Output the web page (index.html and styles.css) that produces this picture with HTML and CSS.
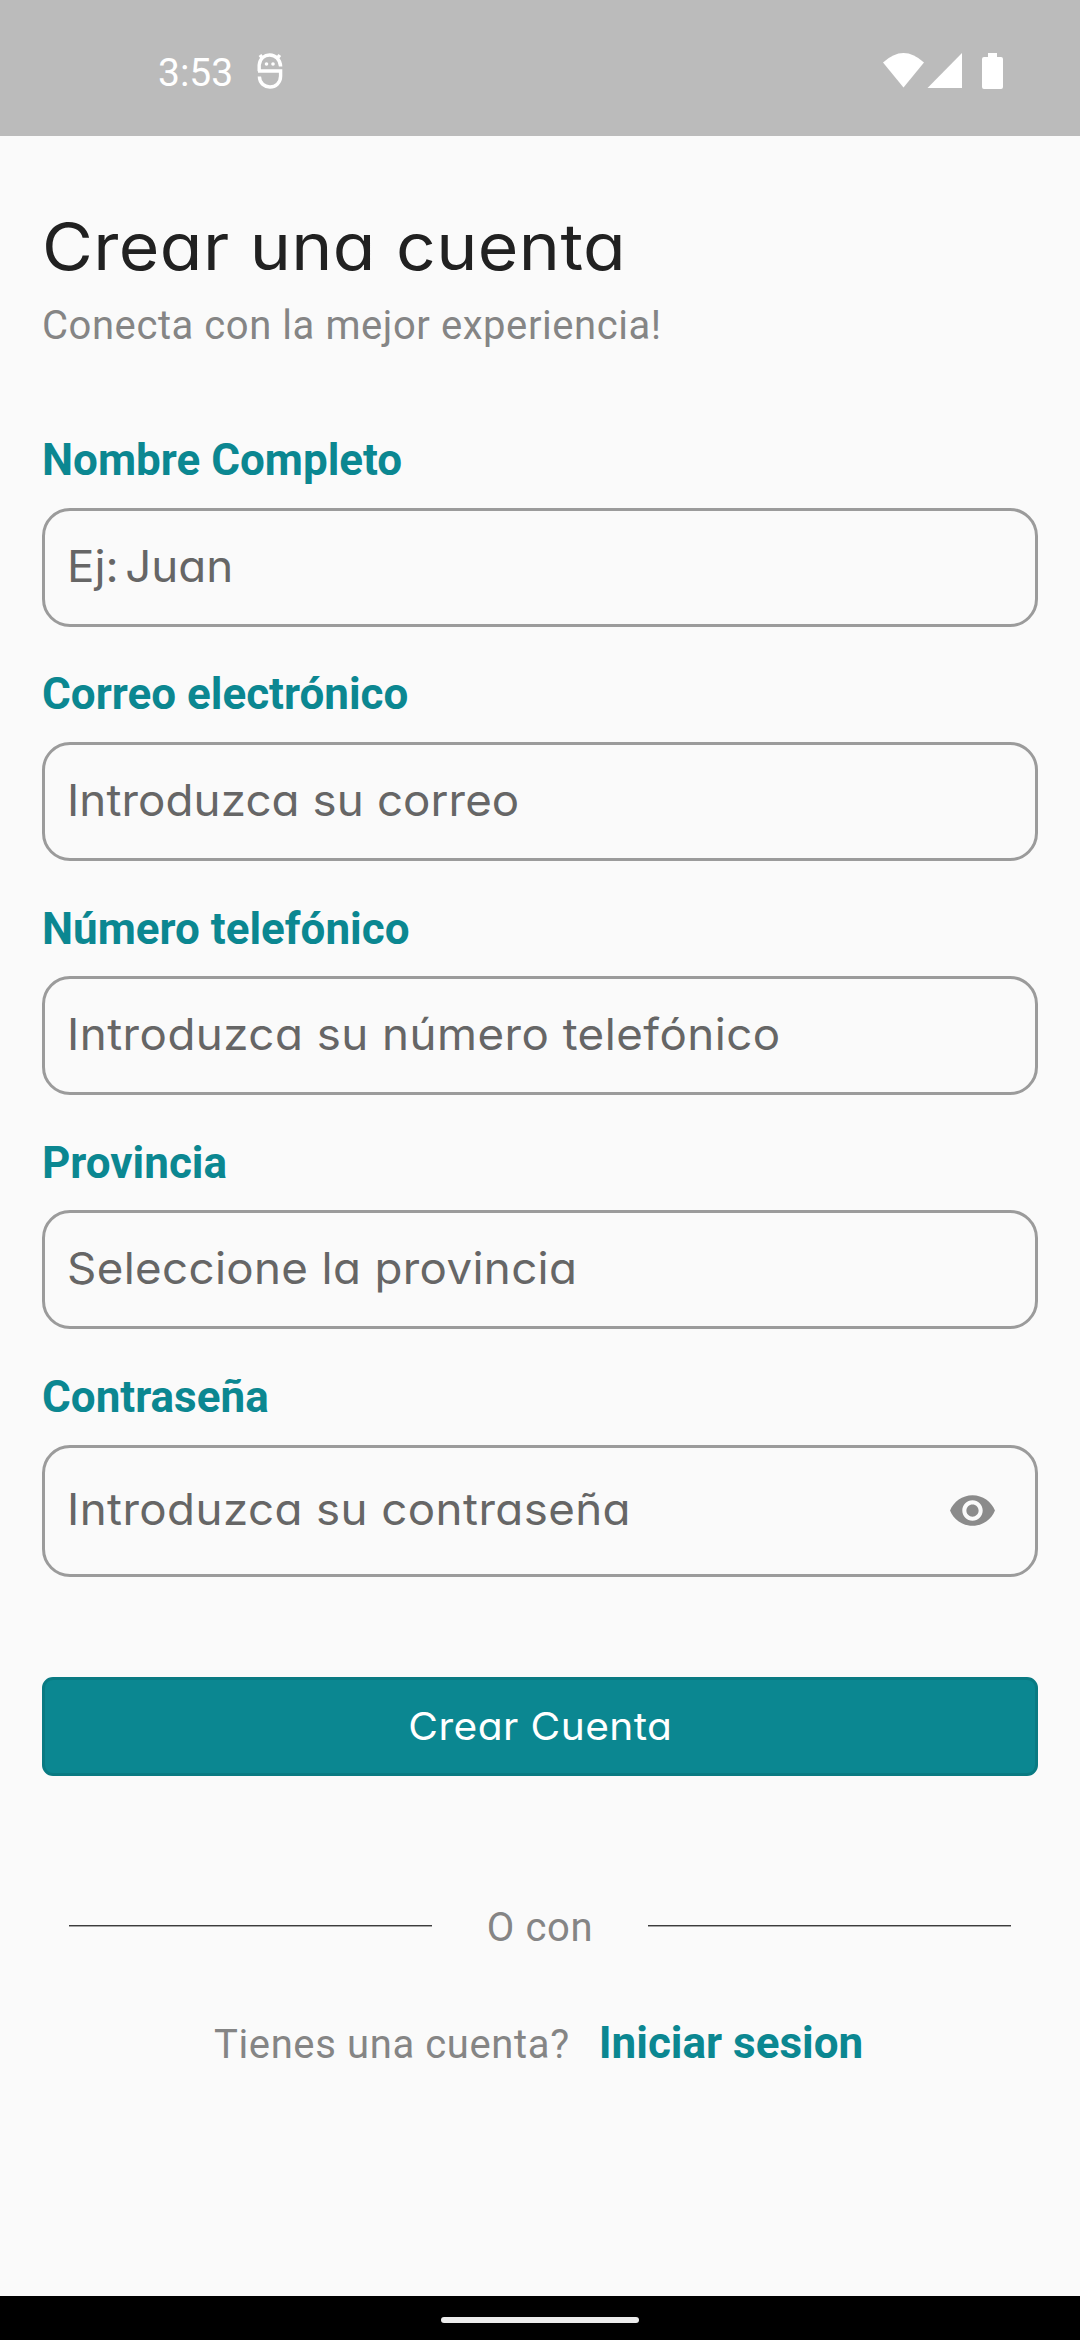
FILE: index.html
```html
<!DOCTYPE html>
<html lang="es">
<head>
<meta charset="utf-8">
<title>Crear una cuenta</title>
<link rel="stylesheet" href="styles.css">
</head>
<body>
<header class="status-bar">
  <div class="status-left">
    <span class="clock">3:53</span>
    <svg class="status-app" viewBox="0 0 26 36" fill="none" stroke="#fff" stroke-width="3.400">
      <path d="M2.200 18.200V12C3 -1.500 22.800 -1.500 23.600 13.500M1 18H23.600V23C23.600 37.500 2.600 37.500 2.400 23.500M3 2L6 6M22.800 2L19.800 6"/>
      <circle cx="9.500" cy="11" r="1.800" fill="#fff" stroke="none"/>
      <circle cx="16" cy="11" r="1.800" fill="#fff" stroke="none"/>
    </svg>
  </div>
  <svg class="status-icons" viewBox="0 0 120 36" fill="#fff">
    <path d="M0 9.500Q20.500 -9.500 41 9.500L20.500 34.500Z"/>
    <path d="M44.500 35L79 0V35Z"/>
    <path d="M105 0H114V4H118Q120 4 120 6V34Q120 36 118 36H101Q99 36 99 34V6Q99 4 101 4H105Z"/>
  </svg>
</header>
<main class="screen">
  <h1 class="title">Crear una cuenta</h1>
  <p class="subtitle">Conecta con la mejor experiencia!</p>
  <form class="form">
    <div class="group">
      <label class="label">Nombre Completo</label>
      <div class="field"><span class="hint hint-name">Ej: Juan</span></div>
    </div>
    <div class="group">
      <label class="label">Correo electrónico</label>
      <div class="field"><span class="hint hint-email">Introduzca su correo</span></div>
    </div>
    <div class="group">
      <label class="label">Número telefónico</label>
      <div class="field"><span class="hint hint-phone">Introduzca su número telefónico</span></div>
    </div>
    <div class="group">
      <label class="label">Provincia</label>
      <div class="field"><span class="hint hint-province">Seleccione la provincia</span></div>
    </div>
    <div class="group">
      <label class="label">Contraseña</label>
      <div class="field field-password">
        <span class="hint hint-password">Introduzca su contraseña</span>
        <svg class="eye" viewBox="0 0 24 24" fill="#8b8b8b"><path d="M12 4.500C7 4.500 2.730 7.610 1 12c1.730 4.390 6 7.500 11 7.500s9.270-3.110 11-7.500c-1.730-4.390-6-7.500-11-7.500zM12 17c-2.760 0-5-2.240-5-5s2.240-5 5-5 5 2.240 5 5-2.240 5-5 5zm0-8c-1.660 0-3 1.340-3 3s1.340 3 3 3 3-1.340 3-3-1.340-3-3-3z"/></svg>
      </div>
    </div>
    <button class="submit" type="button"><span class="submit-text">Crear Cuenta</span></button>
  </form>
  <div class="divider"><span class="rule"></span><span class="divider-text">O con</span><span class="rule"></span></div>
  <p class="login"><span class="login-text">Tienes una cuenta?</span><a class="login-link">Iniciar sesion</a></p>
</main>
<footer class="nav-bar"><span class="handle"></span></footer>
</body>
</html>
```
FILE: styles.css
```css
* { box-sizing: border-box; }

body {
  margin: 0;
  height: 2340px;
  display: flex;
  flex-direction: column;
  background: #fafafa;
  font-family: Roboto, sans-serif;
}

.status-bar {
  height: 136px;
  padding: 53px 77px 0 158px;
  display: flex;
  justify-content: space-between;
  align-items: flex-start;
  background: #bbb;
}

.status-left { display: flex; align-items: flex-start; gap: 24px; }

.clock { font-size: 39px; line-height: 40px; color: #fff; }

.status-app { width: 26px; height: 36px; }

.status-icons { width: 120px; height: 36px; }

.screen { flex: 1; padding: 73px 42px 0; }

.title {
  width: max-content;
  margin: 0;
  font: 400 64.500px/76px Inter, sans-serif;
  font-feature-settings: "cv11";
  letter-spacing: 0.400px;
  transform: scaleX(1.08);
  transform-origin: left;
  color: #212121;
}

.subtitle {
  margin: 16px 0 82px;
  font-size: 40px;
  line-height: 50px;
  letter-spacing: 0.560px;
  color: #858585;
}

.group { margin-bottom: 40.750px; }

.label {
  display: block;
  margin-bottom: 21.500px;
  padding-top: 1px;
  font-size: 44px;
  font-weight: 700;
  line-height: 52px;
  color: #0b8791;
}

.field {
  height: 119px;
  padding: 0 38px 3px 22px;
  display: flex;
  align-items: center;
  justify-content: space-between;
  border: 3px solid #9b9b9b;
  border-radius: 28px;
}

.hint {
  font: 400 43.500px/50px Inter, sans-serif;
  font-feature-settings: "cv11";
  transform: scaleX(1.05);
  transform-origin: left;
  color: #666;
}

.hint-name { word-spacing: -6px; }
.hint-email { letter-spacing: 0.100px; }
.hint-phone { letter-spacing: 0.450px; }
.hint-province { letter-spacing: 0.330px; }
.hint-password { letter-spacing: 0.400px; }

.field-password { height: 132px; }

.eye { width: 49px; height: 49px; position: relative; top: 1.500px; }

.submit {
  display: flex;
  align-items: center;
  justify-content: center;
  width: 100%;
  height: 99px;
  margin-top: 100px;
  padding: 0;
  border: 3px solid #097a82;
  border-radius: 11px;
  background: #0b8791;
  color: #fff;
  font: 400 38px/46px Inter, sans-serif;
  font-feature-settings: "cv11";
}

.submit-text { letter-spacing: 0.400px; transform: scaleX(1.07); }

.divider {
  display: flex;
  align-items: center;
  justify-content: space-between;
  margin-top: 124px;
  padding: 0 27px;
}

.rule { width: 363px; height: 2px; background: linear-gradient(#3c3c3c 50%, #a5a5a5 50%); }

.divider-text {
  padding-top: 3px;
  font-size: 40px;
  line-height: 50px;
  letter-spacing: 0.600px;
  color: #858585;
}

.login {
  margin: 64.500px 0 0;
  padding-left: 172px;
  display: flex;
  align-items: baseline;
}

.login-text { font-size: 40px; line-height: 52px; letter-spacing: 0.620px; color: #858585; }

.login-link { margin-left: 29px; font-size: 44px; font-weight: 700; line-height: 52px; color: #0b8791; }

.nav-bar {
  height: 44px;
  display: flex;
  justify-content: center;
  padding-top: 21px;
  background: #000;
}

.handle { width: 198px; height: 6px; border-radius: 3px; background: #ececec; }
```
